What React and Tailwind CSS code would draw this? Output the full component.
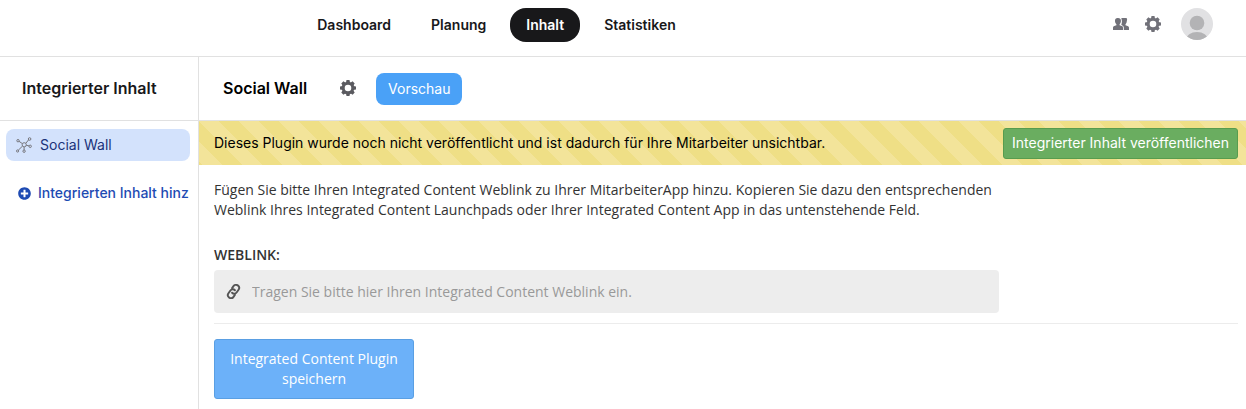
import React, { useState } from "react";
import { FaPlusCircle } from "react-icons/fa";

const navItems = ["Dashboard", "Planung", "Inhalt", "Statistiken"];

const GearIcon = ({ className }) => (
  <svg viewBox="0 0 16 16" className={className} aria-hidden="true">
    <g fill="currentColor">
      {[0, 45, 90, 135].map((angle) => (
        <path
          key={angle}
          d="M6.5 0h3l.6 3h-4.2zM6.5 16h3l.6-3h-4.2z"
          transform={`rotate(${angle} 8 8)`}
        />
      ))}
    </g>
    <circle
      cx="8"
      cy="8"
      r="4.8"
      fill="none"
      stroke="currentColor"
      strokeWidth="3"
    />
  </svg>
);

const PeopleIcon = ({ className }) => (
  <svg
    viewBox="0 0 16 12"
    className={className}
    fill="currentColor"
    aria-hidden="true"
  >
    <path d="M5 0a2.900 2.900 0 0 1 2.900 3c0 1.300-.5 2.500-1.300 3.200v1l2.200.8c1 .4 1.200 1 1.200 2V12H0v-2c0-1 .4-1.600 1.300-2l2.100-.8v-1C2.500 5.500 2 4.300 2 3a2.900 2.900 0 0 1 3-3z" />
    <path d="M8.300.8A2.900 2.900 0 0 1 13.800 3c0 1.300-.5 2.500-1.300 3.200v1l2 .8c1 .4 1.500 1 1.500 2V12h-5.200v-2c0-1.400-.6-2.300-1.900-2.800l-.6-.4C8.700 5.700 9 4.300 8.900 3c0-.8-.2-1.600-.6-2.200z" />
  </svg>
);

const NetworkIcon = ({ className }) => (
  <svg
    viewBox="0 0 16 16"
    className={className}
    fill="none"
    stroke="currentColor"
    aria-hidden="true"
  >
    <path d="M6.200 6.500 3 4.300M9.800 6.300l2.800-3.500M10.200 8.200l3 .8M6.300 9.300l-4 3.900M8.100 10v3" />
    <circle cx="8.200" cy="7.800" r="2.100" />
    <circle cx="2" cy="3.700" r="1.200" />
    <circle cx="13.600" cy="2" r="1.300" />
    <circle cx="14.200" cy="9.300" r="1.200" />
    <circle cx="1.600" cy="14" r="1.100" />
    <circle cx="8.100" cy="14.200" r="1.200" />
  </svg>
);

const LinkIcon = ({ className }) => (
  <svg
    viewBox="0.5 0.5 23 23"
    className={className}
    fill="none"
    stroke="currentColor"
    strokeWidth="2.900"
    strokeLinecap="round"
    strokeLinejoin="round"
    aria-hidden="true"
  >
    <g transform="rotate(-10 12 12)">
      <path d="M9.500 13.500a4.600 4.600 0 0 0 7.200.600l3.400-3.500a4.700 4.700 0 0 0-6.700-6.700l-2.600 2.600" />
      <path d="M14.500 10.500a4.600 4.600 0 0 0-7.200-.600l-3.400 3.500a4.700 4.700 0 0 0 6.700 6.700l2.600-2.600" />
    </g>
  </svg>
);

const Avatar = () => (
  <svg viewBox="0 0 32 32" className="h-8 w-8" aria-hidden="true">
    <defs>
      <clipPath id="avatar-clip">
        <circle cx="16" cy="16" r="16" />
      </clipPath>
    </defs>
    <g clipPath="url(#avatar-clip)">
      <rect width="32" height="32" fill="#e1e1e3" />
      <circle cx="16" cy="15" r="7.300" fill="#b3b3b5" />
      <ellipse cx="16" cy="32" rx="11" ry="8" fill="#b3b3b5" />
    </g>
  </svg>
);

const Header = () => (
  <header className="flex h-[57px] items-start border-b border-[#e1e1e1] pt-2">
    <nav className="flex flex-1 justify-center gap-2">
      {navItems.map((item) => (
        <a
          key={item}
          href="#"
          className={`rounded-2xl px-4 py-[7px] text-sm font-semibold ${
            item === "Inhalt" ? "bg-[#18181a] text-white" : "text-[#18181a]"
          }`}
        >
          {item}
        </a>
      ))}
    </nav>
    <div className="flex h-8 w-[253px] items-center justify-end pr-[33px]">
      <button aria-label="Benutzer" className="mr-4 text-[#717179]">
        <PeopleIcon className="h-3 w-4" />
      </button>
      <button aria-label="Einstellungen" className="mr-5 text-[#717179]">
        <GearIcon className="h-4 w-4" />
      </button>
      <button aria-label="Profil">
        <Avatar />
      </button>
    </div>
  </header>
);

const Sidebar = () => (
  <aside className="w-[199px] shrink-0 border-r border-[#e1e1e1]">
    <h2 className="flex h-16 items-center border-b border-[#e1e1e1] pb-px pl-[22px] font-semibold text-[#18181a]">
      Integrierter Inhalt
    </h2>
    <div className="flex flex-col gap-4 py-2 pr-2 pl-[6px] text-sm">
      <a
        href="#"
        className="flex h-8 items-center gap-2 rounded-lg bg-[#d3e2fc] pl-[10px] text-[#1a3279]"
      >
        <NetworkIcon className="h-4 w-4 text-[#77777d]" />
        Social Wall
      </a>
      <button className="flex h-8 items-center gap-[7px] pl-3 font-medium whitespace-nowrap text-[#1e4bb3]">
        <FaPlusCircle size={13} className="shrink-0" />
        Integrierten Inhalt hinz
      </button>
    </div>
  </aside>
);

const App = () => {
  const [weblink, setWeblink] = useState("");

  return (
    <div className="flex min-h-screen flex-col bg-white font-['Inter',sans-serif]">
      <Header />
      <div className="flex flex-1">
        <Sidebar />
        <main className="min-w-0 flex-1">
          {/* plugin title and preview */}
          <div className="flex h-16 items-center border-b border-[#e1e1e1] pl-6">
            <h1 className="pb-px font-semibold text-black">Social Wall</h1>
            <button
              aria-label="Plugin-Einstellungen"
              className="mr-5 ml-[33px] pb-px text-[#5b5b60]"
            >
              <GearIcon className="h-4 w-4" />
            </button>
            <button className="h-8 rounded-lg bg-[#4aa1f7] px-3 text-sm text-white">
              Vorschau
            </button>
          </div>

          {/* publish notice */}
          <div className="flex min-h-11 items-center justify-between bg-[#efdf86] bg-[linear-gradient(45deg,#f3e49a_25%,transparent_25%,transparent_50%,#f3e49a_50%,#f3e49a_75%,transparent_75%)] bg-size-[40px_40px] pr-2 pl-[15px] text-sm text-black">
            <p>
              Dieses Plugin wurde noch nicht veröffentlicht und ist dadurch für
              Ihre Mitarbeiter unsichtbar.
            </p>
            <button className="h-[31px] rounded-[3px] border border-[#589c4e] bg-[#6aad60] px-2 text-white">
              Integrierter Inhalt veröffentlichen
            </button>
          </div>

          {/* weblink form */}
          <form
            onSubmit={(e) => e.preventDefault()}
            className="pt-[15px] pr-2 pl-[15px] font-['Open_Sans',sans-serif] text-sm text-[#333333]"
          >
            <p className="max-w-[785px]">
              Fügen Sie bitte Ihren Integrated Content Weblink zu Ihrer
              MitarbeiterApp hinzu. Kopieren Sie dazu den entsprechenden Weblink
              Ihres Integrated Content Launchpads oder Ihrer Integrated Content
              App in das untenstehende Feld.
            </p>
            <label htmlFor="weblink" className="mt-[25px] block font-semibold">
              WEBLINK:
            </label>
            <div className="mt-[5px] flex h-[43px] max-w-[785px] items-center gap-[11px] rounded-sm bg-[#ededed] pl-3">
              <LinkIcon className="h-[15px] w-[15px] shrink-0 text-[#555555]" />
              <input
                id="weblink"
                type="text"
                value={weblink}
                onChange={(e) => setWeblink(e.target.value)}
                placeholder="Tragen Sie bitte hier Ihren Integrated Content Weblink ein."
                className="h-full flex-1 bg-transparent outline-none placeholder:text-[#999999]"
              />
            </div>
            <hr className="mt-[10px] border-[#ececec]" />
            <button
              type="submit"
              className="mt-[15px] w-[200px] rounded-[3px] border border-[#5a9fe3] bg-[#6cb1f9] px-3 py-[9px] text-white"
            >
              Integrated Content Plugin speichern
            </button>
          </form>
        </main>
      </div>
    </div>
  );
};

export default App;
